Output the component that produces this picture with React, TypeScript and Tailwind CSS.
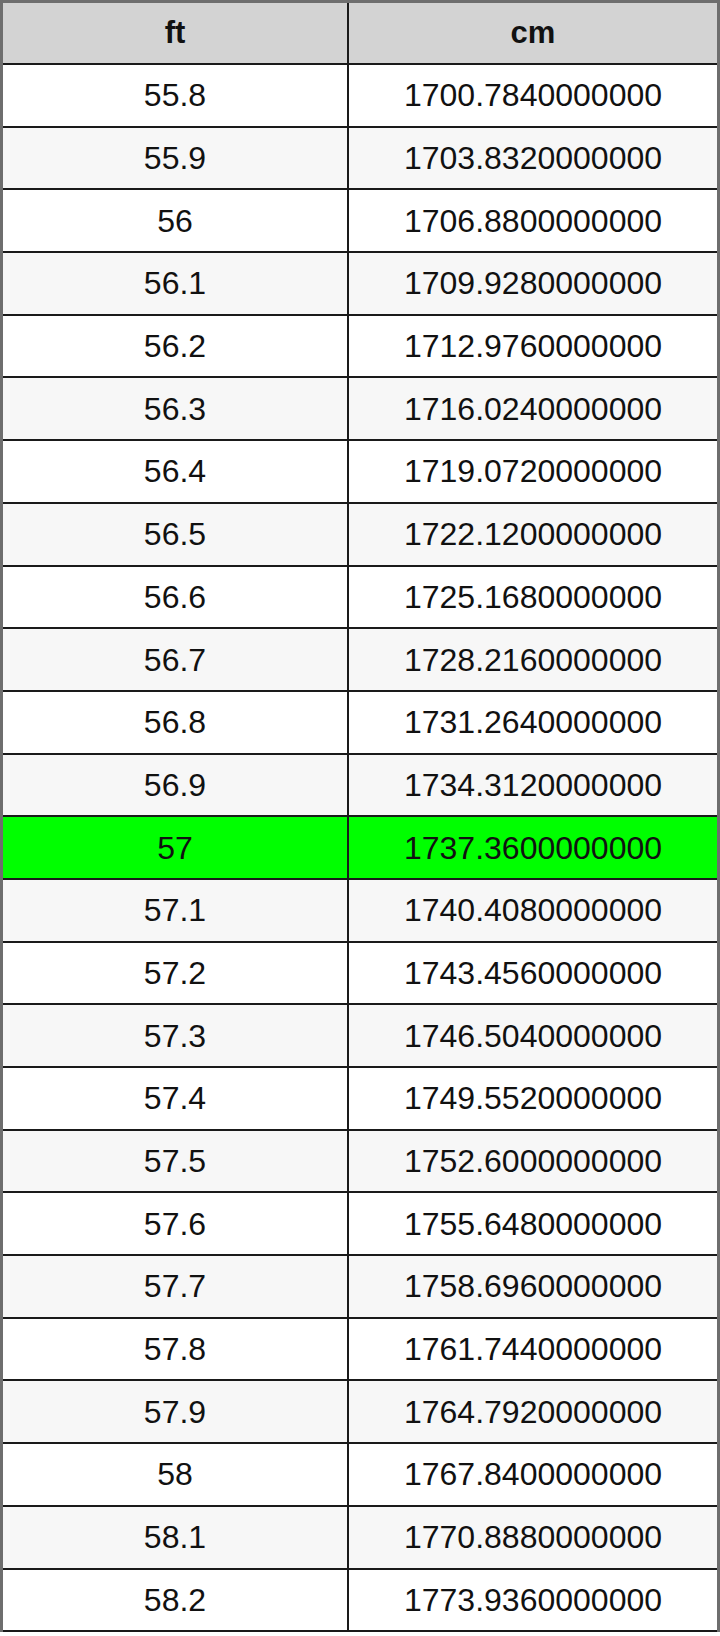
const rows: [string, string][] = [
  ["55.8", "1700.7840000000"],
  ["55.9", "1703.8320000000"],
  ["56", "1706.8800000000"],
  ["56.1", "1709.9280000000"],
  ["56.2", "1712.9760000000"],
  ["56.3", "1716.0240000000"],
  ["56.4", "1719.0720000000"],
  ["56.5", "1722.1200000000"],
  ["56.6", "1725.1680000000"],
  ["56.7", "1728.2160000000"],
  ["56.8", "1731.2640000000"],
  ["56.9", "1734.3120000000"],
  ["57", "1737.3600000000"],
  ["57.1", "1740.4080000000"],
  ["57.2", "1743.4560000000"],
  ["57.3", "1746.5040000000"],
  ["57.4", "1749.5520000000"],
  ["57.5", "1752.6000000000"],
  ["57.6", "1755.6480000000"],
  ["57.7", "1758.6960000000"],
  ["57.8", "1761.7440000000"],
  ["57.9", "1764.7920000000"],
  ["58", "1767.8400000000"],
  ["58.1", "1770.8880000000"],
  ["58.2", "1773.9360000000"],
];

const App = () => {
  return (
    <div className="h-[1636px] w-[720px] bg-white font-['Liberation_Sans',Arial,sans-serif] text-[32px] text-[#111]">
      <div className="border-x-[3px] border-t-[3px] border-[#6e6e6e]">
        <div className="grid h-[62px] grid-cols-[346px_1fr] border-b-2 border-[#1a1a1a] bg-[#d3d3d3] text-[31px] font-bold">
          <div className="flex items-center justify-center border-r-2 border-[#1a1a1a]">
            ft
          </div>
          <div className="flex items-center justify-center">cm</div>
        </div>
        {rows.map(([ft, cm], i) => {
          const bg =
            ft === "57" ? "bg-[#00ff00]" : i % 2 === 0 ? "bg-white" : "bg-[#f7f7f7]";
          return (
            <div
              key={ft}
              className={`grid h-[62.7px] grid-cols-[346px_1fr] border-b-2 border-[#1a1a1a] ${bg}`}
            >
              <div className="flex items-center justify-center border-r-2 border-[#1a1a1a]">
                {ft}
              </div>
              <div className="flex items-center justify-center">{cm}</div>
            </div>
          );
        })}
      </div>
    </div>
  );
};

export default App;
